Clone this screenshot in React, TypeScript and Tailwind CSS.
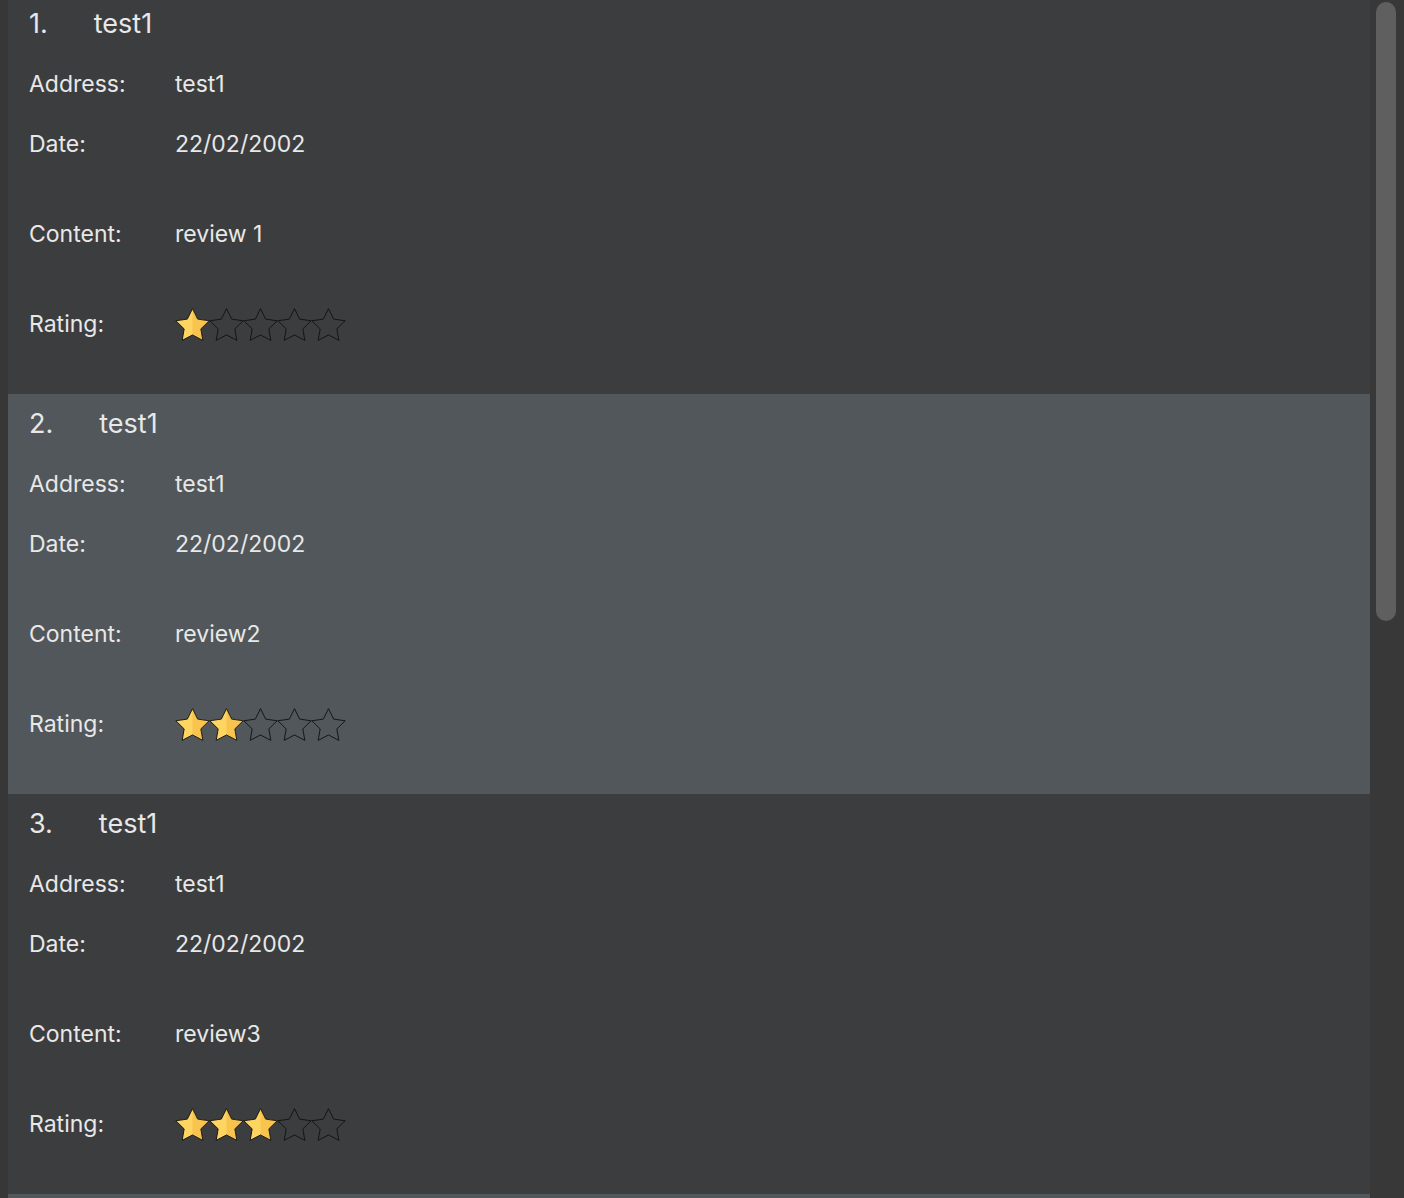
import React from 'react';

interface Review {
  id: number;
  name: string;
  address: string;
  date: string;
  content: string;
  rating: number;
}

const reviews: Review[] = [
  { id: 1, name: 'test1', address: 'test1', date: '22/02/2002', content: 'review 1', rating: 1 },
  { id: 2, name: 'test1', address: 'test1', date: '22/02/2002', content: 'review2', rating: 2 },
  { id: 3, name: 'test1', address: 'test1', date: '22/02/2002', content: 'review3', rating: 3 },
];

const STAR = '12,2 15.09,8.26 22,9.27 17,14.14 18.18,21.02 12,17.77 5.82,21.02 7,14.14 2,9.27 8.91,8.26';

function Star({ filled }: { filled: boolean }) {
  return (
    <svg viewBox="1.6 1.6 20.8 19.8" className="w-[35px] h-[33px] -mr-px shrink-0">
      {filled && (
        <>
          <polygon points={STAR} fill="#ffd562" />
          <polygon points="12,2 15.09,8.26 22,9.27 17,14.14 18.18,21.02 12,17.77" fill="#f8c44e" />
        </>
      )}
      <polygon points={STAR} fill="none" stroke="#111" strokeWidth="0.55" strokeLinejoin="round" />
    </svg>
  );
}

function Row({ label, children, tall }: { label: string; children: React.ReactNode; tall?: boolean }) {
  return (
    <div className={`flex items-center ${tall ? 'h-[120px]' : 'h-[60px]'}`}>
      <span className="w-[146px] shrink-0">{label}</span>
      <div className="flex items-center">{children}</div>
    </div>
  );
}

function ReviewCard({ review, index }: { review: Review; index: number }) {
  const bg = index % 2 === 0 ? 'bg-[#3c3d3f]' : 'bg-[#51575a]';
  return (
    <div className={`h-[400px] shrink-0 pl-[21px] ${bg}`}>
      <div className="flex items-center h-[60px] text-[27px] gap-[46px]">
        <span>{review.id}.</span>
        <span>{review.name}</span>
      </div>
      <div className="text-[23px]">
        <Row label="Address:">{review.address}</Row>
        <Row label="Date:">{review.date}</Row>
        <Row label="Content:" tall>
          {review.content}
        </Row>
        <Row label="Rating:">
          {[1, 2, 3, 4, 5].map((n) => (
            <Star key={n} filled={n <= review.rating} />
          ))}
        </Row>
      </div>
    </div>
  );
}

export default function App() {
  return (
    <div
      className="flex w-[1404px] h-[1198px] overflow-hidden bg-[#373737] text-[#e8e8e8]"
      style={{ fontFamily: 'Inter, "Noto Sans", sans-serif' }}
    >
      <div className="w-2 shrink-0" />
      <div className="flex flex-col w-[1362px] shrink-0 overflow-hidden">
        <div className="flex flex-col -mt-1.5">
          {reviews.map((r, i) => (
            <ReviewCard key={r.id} review={r} index={i} />
          ))}
          {/* next card, scrolled below the fold */}
          <div className="h-[400px] shrink-0 bg-[#51575a]" />
        </div>
      </div>
      <div className="w-[34px] shrink-0 bg-[#383838] pl-1.5 pt-0.5">
        <div className="w-5 h-[619px] rounded-full bg-[#5f5f5f]" />
      </div>
    </div>
  );
}
